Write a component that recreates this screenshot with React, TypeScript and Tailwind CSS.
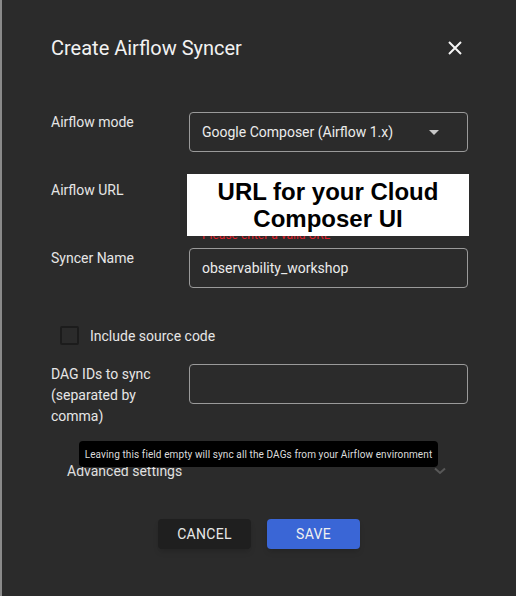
const labelCls = "text-[14px] leading-5 text-[#e6e6e6]";
const boxCls =
  "h-10 w-[279px] rounded border border-[#9a9a9a] flex items-center px-[12px] text-[14px] text-[#ececec]";

const CloseIcon = () => (
  <svg width="14" height="14" viewBox="0 0 14 14" className="text-[#f5f5f5]">
    <path d="M1 1L13 13M13 1L1 13" stroke="currentColor" strokeWidth="2" />
  </svg>
);

const App = () => {
  return (
    <div
      className="w-[516px] h-[596px] bg-[#2b2b2b] border-l-2 border-[#8a8a8a] pl-[49px] relative overflow-hidden"
      style={{ fontFamily: "Roboto, 'Liberation Sans', sans-serif" }}
    >
      <div className="pt-[34px] flex items-center justify-between w-[411px] h-[62px]">
        <h2 className="text-[20px] leading-[28px] text-[#f2f2f2] font-normal">
          Create Airflow Syncer
        </h2>
        <CloseIcon />
      </div>

      <div className="mt-[50px] grid grid-cols-[138px_279px]">
        <div className={labelCls}>Airflow mode</div>
        <div className={boxCls + " justify-between pr-[28px]"}>
          <span>Google Composer (Airflow 1.x)</span>
          <svg width="10" height="5" viewBox="0 0 10 5">
            <path d="M0 0L10 0L5 5Z" fill="#c8c8c8" />
          </svg>
        </div>
      </div>

      <div className="mt-[24px] grid grid-cols-[138px_279px] h-[72px]">
        <div className={labelCls + " mt-[4px]"}>Airflow URL</div>
        <div className="relative">
          <div className={boxCls} />
          <div className="mt-[11px] pl-[13px] text-[12px] leading-4 text-[#e0202a]">
            Please enter a valid URL
          </div>
          <div
            className="absolute left-[-2px] top-[-2px] w-[282px] h-[62px] bg-white flex items-center justify-center text-center text-[24px] leading-[27px] font-bold text-black"
            style={{ fontFamily: "'Liberation Sans', Arial, sans-serif" }}
          >
            URL for your Cloud
            <br />
            Composer UI
          </div>
        </div>
      </div>

      <div className="grid grid-cols-[138px_279px]">
        <div className={labelCls}>Syncer Name</div>
        <div className={boxCls}>observability_workshop</div>
      </div>

      <div className="mt-[38px] ml-[9px] flex items-center gap-[11px] h-[19px]">
        <div className="w-[19px] h-[19px] rounded-[2px] border-2 border-[#1c1c1c]" />
        <span className="text-[14px] text-[#e6e6e6] mt-[2px]">Include source code</span>
      </div>

      <div className="mt-[19px] grid grid-cols-[138px_279px]">
        <div className="text-[14px] leading-[21px] text-[#e6e6e6] w-[110px]">
          DAG IDs to sync (separated by comma)
        </div>
        <div className={boxCls} />
      </div>

      <div className="relative mt-[34px] ml-[16px] w-[381px] flex items-center justify-between h-5">
        <span className="text-[14px] text-[#e0e0e0]">Advanced settings</span>
        <svg width="12" height="8" viewBox="0 0 12 8" className="mr-[2px]">
          <path d="M1 1.5L6 6L11 1.5" stroke="#585858" strokeWidth="2" fill="none" />
        </svg>
        <div className="absolute left-[12px] top-[-20px] w-[359px] h-[26px] rounded bg-black flex items-center justify-center text-[10px] tracking-[0.1px] text-[#dcdcdc] whitespace-nowrap">
          Leaving this field empty will sync all the DAGs from your Airflow environment
        </div>
      </div>

      <div className="mt-[38px] flex gap-4 pl-[107px]">
        <button className="w-[93px] h-[30px] rounded bg-[#1f1f1f] shadow-md text-[14px] text-[#e8e8e8] tracking-[0.3px]">
          CANCEL
        </button>
        <button className="w-[93px] h-[30px] rounded bg-[#3a66d6] shadow-md text-[14px] text-[#f0f0f0] tracking-[0.3px]">
          SAVE
        </button>
      </div>
    </div>
  );
};

export default App;
